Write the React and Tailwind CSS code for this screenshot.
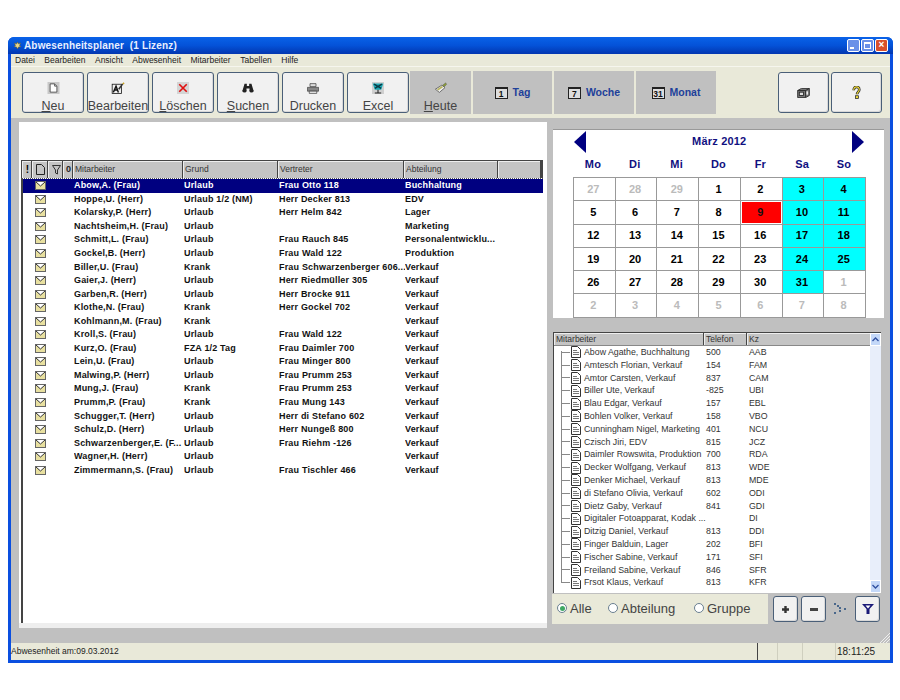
const menus = ['Datei', 'Bearbeiten', 'Ansicht', 'Abwesenheit', 'Mitarbeiter', 'Tabellen', 'Hilfe'];

const absences = [
  ['Abow,A. (Frau)', 'Urlaub', 'Frau Otto 118', 'Buchhaltung'],
  ['Hoppe,U. (Herr)', 'Urlaub 1/2 (NM)', 'Herr Decker 813', 'EDV'],
  ['Kolarsky,P. (Herr)', 'Urlaub', 'Herr Helm 842', 'Lager'],
  ['Nachtsheim,H. (Frau)', 'Urlaub', '', 'Marketing'],
  ['Schmitt,L. (Frau)', 'Urlaub', 'Frau Rauch 845', 'Personalentwicklu...'],
  ['Gockel,B. (Herr)', 'Urlaub', 'Frau Wald 122', 'Produktion'],
  ['Biller,U. (Frau)', 'Krank', 'Frau Schwarzenberger 606...', 'Verkauf'],
  ['Gaier,J. (Herr)', 'Urlaub', 'Herr Riedmüller 305', 'Verkauf'],
  ['Garben,R. (Herr)', 'Urlaub', 'Herr Brocke 911', 'Verkauf'],
  ['Klothe,N. (Frau)', 'Krank', 'Herr Gockel 702', 'Verkauf'],
  ['Kohlmann,M. (Frau)', 'Krank', '', 'Verkauf'],
  ['Kroll,S. (Frau)', 'Urlaub', 'Frau Wald 122', 'Verkauf'],
  ['Kurz,O. (Frau)', 'FZA 1/2 Tag', 'Frau Daimler 700', 'Verkauf'],
  ['Lein,U. (Frau)', 'Urlaub', 'Frau Minger 800', 'Verkauf'],
  ['Malwing,P. (Herr)', 'Urlaub', 'Frau Prumm 253', 'Verkauf'],
  ['Mung,J. (Frau)', 'Krank', 'Frau Prumm 253', 'Verkauf'],
  ['Prumm,P. (Frau)', 'Krank', 'Frau Mung 143', 'Verkauf'],
  ['Schugger,T. (Herr)', 'Urlaub', 'Herr di Stefano 602', 'Verkauf'],
  ['Schulz,D. (Herr)', 'Urlaub', 'Herr Nungeß 800', 'Verkauf'],
  ['Schwarzenberger,E. (F...', 'Urlaub', 'Frau Riehm -126', 'Verkauf'],
  ['Wagner,H. (Herr)', 'Urlaub', '', 'Verkauf'],
  ['Zimmermann,S. (Frau)', 'Urlaub', 'Frau Tischler 466', 'Verkauf'],
];

const staff = [
  ['Abow Agathe, Buchhaltung', '500', 'AAB'],
  ['Amtesch Florian, Verkauf', '154', 'FAM'],
  ['Amtor Carsten, Verkauf', '837', 'CAM'],
  ['Biller Ute, Verkauf', '-825', 'UBI'],
  ['Blau Edgar, Verkauf', '157', 'EBL'],
  ['Bohlen Volker, Verkauf', '158', 'VBO'],
  ['Cunningham Nigel, Marketing', '401', 'NCU'],
  ['Czisch Jiri, EDV', '815', 'JCZ'],
  ['Daimler Rowswita, Produktion', '700', 'RDA'],
  ['Decker Wolfgang, Verkauf', '813', 'WDE'],
  ['Denker Michael, Verkauf', '813', 'MDE'],
  ['di Stefano Olivia, Verkauf', '602', 'ODI'],
  ['Dietz Gaby, Verkauf', '841', 'GDI'],
  ['Digitaler Fotoapparat, Kodak ...', '', 'DI'],
  ['Ditzig Daniel, Verkauf', '813', 'DDI'],
  ['Finger Balduin, Lager', '202', 'BFI'],
  ['Fischer Sabine, Verkauf', '171', 'SFI'],
  ['Freiland Sabine, Verkauf', '846', 'SFR'],
  ['Frsot Klaus, Verkauf', '813', 'KFR'],
];

// [tag, art] art: m = anderer Monat, w = Wochenende, h = heute
const days = [
  ['27', 'm'], ['28', 'm'], ['29', 'm'], ['1', ''], ['2', ''], ['3', 'w'], ['4', 'w'],
  ['5', ''], ['6', ''], ['7', ''], ['8', ''], ['9', 'h'], ['10', 'w'], ['11', 'w'],
  ['12', ''], ['13', ''], ['14', ''], ['15', ''], ['16', ''], ['17', 'w'], ['18', 'w'],
  ['19', ''], ['20', ''], ['21', ''], ['22', ''], ['23', ''], ['24', 'w'], ['25', 'w'],
  ['26', ''], ['27', ''], ['28', ''], ['29', ''], ['30', ''], ['31', 'w'], ['1', 'm'],
  ['2', 'm'], ['3', 'm'], ['4', 'm'], ['5', 'm'], ['6', 'm'], ['7', 'm'], ['8', 'm'],
];

const Envelope = () => (
  <svg width="11" height="9" viewBox="0 0 11 9">
    <rect x="0.5" y="0.5" width="10" height="8" fill="#e8e0a0" stroke="#666" />
    <path d="M1 1l4.500 4L10 1" fill="#fff" stroke="#333" />
  </svg>
);

const DocIcon = () => (
  <svg width="10" height="12" viewBox="0 0 10 12">
    <path d="M0.5 0.500h6l3 3v8h-9z" fill="#fff" stroke="#333" />
    <path d="M2 4.500h4M2 6.500h6M2 8.500h6" stroke="#777" />
  </svg>
);

const icons = {
  neu: (
    <svg width="13" height="12" viewBox="0 0 16 16">
      <rect width="16" height="16" fill="#c8c8c8" />
      <path d="M3.500 2.500h6l3 3v8h-9z" fill="#fff" stroke="#333" />
      <path d="M9.500 2.500v3h3" fill="#ddd" stroke="#333" />
    </svg>
  ),
  edit: (
    <svg width="14" height="13" viewBox="0 0 18 16">
      <rect x="1.500" y="2.500" width="12" height="12" fill="#eee" stroke="#111" />
      <path d="M3 13l3.500-8 3 8M4.500 10h4" fill="none" stroke="#111" strokeWidth="1.800" />
      <path d="M10 9l5-7" stroke="#333" strokeWidth="2" />
      <path d="M15 2l2-1" stroke="#c9a227" strokeWidth="2" />
    </svg>
  ),
  del: (
    <svg width="12" height="12" viewBox="0 0 16 16">
      <rect width="16" height="16" fill="#d4d4d4" />
      <path d="M3 3l10 10M13 3L3 13" stroke="#e01010" strokeWidth="2.200" />
    </svg>
  ),
  find: (
    <svg width="12" height="10" viewBox="0 0 15 13">
      <path d="M3 1h3v3h3V1h3l3 10h-5.500V7H5.500v4H0z" fill="#222" />
      <circle cx="3" cy="10" r="2.500" fill="#222" />
      <circle cx="12" cy="10" r="2.500" fill="#222" />
    </svg>
  ),
  print: (
    <svg width="12" height="11" viewBox="0 0 16 14">
      <path d="M4 .5h8v4H4z" fill="#ddd" stroke="#444" />
      <path d="M.5 5.500h15v5H.5z" fill="#888" stroke="#444" />
      <path d="M3 10.500h10v3H3z" fill="#eee" stroke="#444" />
    </svg>
  ),
  excel: (
    <svg width="12" height="12" viewBox="0 0 17 17">
      <rect width="17" height="17" fill="#cfcfcf" />
      <path d="M1 2h15l-3 9H4z" fill="#19a8b4" />
      <path d="M3 3l10 6M14 3L4 9" stroke="#0b3a45" strokeWidth="2" />
      <path d="M8.500 11v4M4 15.500h9" stroke="#222" strokeWidth="1.500" />
    </svg>
  ),
  heute: (
    <svg width="14" height="12" viewBox="0 0 16 15">
      <path d="M1 9l8-5 4 3-7 6z" fill="#eee" stroke="#555" />
      <path d="M3 9l6-4 1.500 1.500-6 4z" fill="#b9b45a" />
      <path d="M10 4l4-3 1 2-3 3z" fill="#8a9a3a" stroke="#555" strokeWidth=".5" />
    </svg>
  ),
  box: (
    <svg width="13" height="10" viewBox="0 0 15 12">
      <path d="M.5 3L5 .5h9.500V9L10 11.500H.5z" fill="#777" stroke="#222" />
      <path d="M.5 3H10v8.500M10 3l4.500-2.500" fill="none" stroke="#222" />
      <rect x="2.500" y="5" width="5" height="4" fill="#ddd" stroke="#222" />
      <rect x="11" y="4" width="2" height="4" fill="#eee" />
    </svg>
  ),
  help: (
    <svg width="9" height="13" viewBox="0 0 9 14">
      <path d="M1.500 4.500C1.500 2 3 1 4.500 1S7.500 2 7.500 4c0 2-2.500 2.500-2.500 5" fill="none" stroke="#222" strokeWidth="2.800" />
      <path d="M1.500 4.500C1.500 2 3 1 4.500 1S7.500 2 7.500 4c0 2-2.500 2.500-2.500 5" fill="none" stroke="#f1dc3a" strokeWidth="1.200" />
      <rect x="3.500" y="10.500" width="3" height="3" fill="#f1dc3a" stroke="#222" strokeWidth=".8" />
    </svg>
  ),
};

const xpButton = 'rounded-[3px] border border-[#4a5f78] bg-[#f1f1f1] shadow-[inset_-1px_-1px_0_#d8d8d8]';

function ToolButton({ icon, u, rest }) {
  return (
    <div className={`${xpButton} w-[62px] h-[41px] flex flex-col items-center pt-[8px] overflow-hidden`}>
      <div className="h-[14px] shrink-0 flex items-center">{icon}</div>
      <div className="mt-[4px] text-[12.500px] leading-[15px] text-[#444] whitespace-nowrap">
        {u ? <span className="underline">{u}</span> : null}{rest}
      </div>
    </div>
  );
}

function ViewTab({ num, label, w }) {
  return (
    <div className={`${w} h-[43px] bg-[#c0c0c0] flex items-center justify-center gap-[5px]`}>
      <span className="w-[13px] h-[12px] border border-[#222] border-t-2 bg-[#ddd] text-[8.500px] font-bold leading-[10px] text-center text-[#111]">{num}</span>
      <span className="text-[10.500px] font-bold text-[#20409a]">{label}</span>
    </div>
  );
}

function HeadCell({ w, children, center }) {
  return (
    <div className={`${w} h-full shrink-0 bg-[#c4c4c4] border-r border-[#444] shadow-[inset_1px_1px_0_#eee] text-[8.500px] text-[#333] pl-[2px] overflow-hidden whitespace-nowrap flex items-center ${center ? 'justify-center pl-0' : ''}`}>
      {children}
    </div>
  );
}

function Radio({ label, checked, w }) {
  return (
    <div className={`${w} flex items-center gap-[3px]`}>
      <span className="w-[10px] h-[10px] rounded-full border border-[#6a7f90] bg-white flex items-center justify-center">
        {checked ? <span className="w-[5px] h-[5px] rounded-full bg-[#3fa864]" /> : null}
      </span>
      <span className="text-[13px] leading-none text-[#444]">{label}</span>
    </div>
  );
}

function SmallButton({ children }) {
  return <div className={`${xpButton} w-[25px] h-[26px] flex items-center justify-center`}>{children}</div>;
}

export default function App() {
  return (
    <div className="w-[900px] h-[700px] bg-white pt-[37px] pl-[8px] overflow-hidden font-['Liberation_Sans',Arial,sans-serif]">
      <div className="w-[885px] h-[626px] flex flex-col rounded-t-[6px] bg-[#0a4fe0] px-[3px] pb-[3px]">
        {/* Titelleiste */}
        <div className="h-[17px] -mx-[3px] px-[5px] shrink-0 flex items-center rounded-t-[6px] bg-gradient-to-b from-[#0a62e8] via-[#0452d8] to-[#0336b0]">
          <svg width="9" height="9" viewBox="0 0 9 9">
            <path d="M4.500 1l1 2 2-1-1 2.500 1.500 1-2.500.5-1 2-1-2-2.500-.5 1.500-1L1.500 2l2 1z" fill="#e8d890" stroke="#6a5a20" strokeWidth=".5" />
          </svg>
          <span className="ml-[2px] text-[10px] font-bold text-[#e8f0ff] tracking-[0.15px] whitespace-pre">Abwesenheitsplaner  (1 Lizenz)</span>
          <div className="ml-auto flex gap-[1px]">
            <div className="w-[13px] h-[13px] rounded-[2px] border border-white bg-[#6a90e8] flex items-end pl-[2px] pb-[2px]"><span className="w-[4px] h-[2px] bg-white" /></div>
            <div className="w-[13px] h-[13px] rounded-[2px] border border-white bg-[#6a90e8] flex items-center justify-center"><span className="w-[7px] h-[7px] border border-white border-t-2" /></div>
            <div className="w-[13px] h-[13px] rounded-[2px] border border-white bg-[#d8502c] text-white text-[10px] font-bold leading-[10px] text-center">×</div>
          </div>
        </div>

        {/* Menue */}
        <div className="h-[13px] shrink-0 bg-[#e9e9d9] flex items-center pl-[4px] gap-[9.500px] text-[8.500px] text-[#222] border-b border-[#f6f6ee]">
          {menus.map(m => <span key={m}>{m}</span>)}
        </div>

        {/* Werkzeugleiste */}
        <div className="h-[51px] shrink-0 bg-[#e9e9d9] flex items-start pl-[11px] pt-[5px]">
          <div className="flex gap-[3px]">
            <ToolButton icon={icons.neu} u="N" rest="eu" />
            <ToolButton icon={icons.edit} rest="Bearbeiten" />
            <ToolButton icon={icons.del} u="L" rest="öschen" />
            <ToolButton icon={icons.find} u="S" rest="uchen" />
            <ToolButton icon={icons.print} rest="Drucken" />
            <ToolButton icon={icons.excel} rest="Excel" />
          </div>
          <div className="-mt-[1px] ml-[1px] flex gap-[2px]">
            <div className="w-[61px] h-[43px] bg-[#c0c0c0] flex flex-col items-center pt-[10px]">
              <div className="h-[14px] flex items-center">{icons.heute}</div>
              <div className="mt-[4px] text-[12.500px] leading-[15px] text-[#444]"><span className="underline">H</span>eute</div>
            </div>
            <ViewTab num="1" label="Tag" w="w-[79px]" />
            <ViewTab num="7" label="Woche" w="w-[80px]" />
            <ViewTab num="31" label="Monat" w="w-[80px]" />
          </div>
          <div className="ml-[62px] flex gap-[2px]">
            <div className={`${xpButton} w-[51px] h-[41px] flex items-center justify-center`}>{icons.box}</div>
            <div className={`${xpButton} w-[51px] h-[41px] flex items-center justify-center`}>{icons.help}</div>
          </div>
        </div>

        {/* Arbeitsbereich */}
        <div className="flex-1 min-h-0 bg-[#c0c0c0] flex pl-[8px] pt-[4px] relative">
          {/* Abwesenheiten */}
          <div className="w-[528px] h-[506px] shrink-0 bg-white pt-[38px] pl-[2px] border-b-[5px] border-[#eee]">
            <div className="h-full flex flex-col">
              <div className="w-[522px] h-[18px] shrink-0 flex border-t border-l border-r-2 border-[#444]">
                <HeadCell w="w-[10px]" center><span className="font-bold text-[10px] text-black">!</span></HeadCell>
                <HeadCell w="w-[16px]" center>
                  <svg width="9" height="11" viewBox="0 0 9 11"><path d="M.5.5h5l3 3v7h-8z" fill="none" stroke="#222" /></svg>
                </HeadCell>
                <HeadCell w="w-[15px]" center>
                  <svg width="9" height="10" viewBox="0 0 9 10"><path d="M.5.5h8L5.500 5v4l-2-1V5z" fill="none" stroke="#333" /></svg>
                </HeadCell>
                <HeadCell w="w-[10px]" center><span className="font-bold text-[9px] text-[#222]">0</span></HeadCell>
                <HeadCell w="w-[110px]">Mitarbeiter</HeadCell>
                <HeadCell w="w-[95px]">Grund</HeadCell>
                <HeadCell w="w-[126px]">Vertreter</HeadCell>
                <HeadCell w="w-[94px]">Abteilung</HeadCell>
                <HeadCell w="flex-1"></HeadCell>
              </div>
              <div className="w-[522px] shrink-0 border-b border-dotted border-[#555]" />
              <div className="flex-1 min-h-0 w-[522px] border-l-2 border-[#444]">
                {absences.map((row, i) => (
                  <div
                    key={row[0]}
                    className={`h-[13.550px] flex items-center text-[9px] font-bold leading-none tracking-[0.18px] whitespace-nowrap ${i === 0 ? 'bg-[#000080] text-white' : 'text-[#111]'}`}
                  >
                    <div className="w-[51px] pl-[12px] flex items-center"><Envelope /></div>
                    <div className="w-[110px] overflow-hidden">{row[0]}</div>
                    <div className="w-[95px] overflow-hidden">{row[1]}</div>
                    <div className="w-[126px] overflow-hidden">{row[2]}</div>
                    <div className="flex-1 overflow-hidden">{row[3]}</div>
                  </div>
                ))}
              </div>
            </div>
          </div>

          {/* Rechte Spalte */}
          <div className="ml-[6px] w-[332px] shrink-0 flex flex-col pt-[7px]">
            <div className="w-[331px] h-[189px] bg-white border-t border-[#999] pl-[20px] shrink-0">
              <div className="w-[293px] flex items-center justify-between h-[23px] pl-[1px] pr-[1.500px]">
                <svg width="12" height="22" viewBox="0 0 12 22"><path d="M12 0v22L0 11z" fill="#000080" /></svg>
                <span className="text-[11px] font-bold text-[#101080] tracking-[0.2px]">März 2012</span>
                <svg width="12" height="22" viewBox="0 0 12 22"><path d="M0 0v22l12-11z" fill="#000080" /></svg>
              </div>
              <div className="w-[293px] grid grid-cols-7 h-[24px] pb-[2px] items-center">
                {['Mo', 'Di', 'Mi', 'Do', 'Fr', 'Sa', 'So'].map(d => (
                  <div key={d} className="text-center pr-[2px] text-[11px] font-bold text-[#101080] tracking-[0.2px]">{d}</div>
                ))}
              </div>
              <div className="w-[293px] grid grid-cols-7 border-t border-l border-[#999]">
                {days.map(([d, t], i) => (
                  <div
                    key={i}
                    className={`h-[23.300px] pr-[2px] border-r border-b border-[#999] flex items-center justify-center text-[11px] font-bold ${
                      t === 'm' ? 'text-[#bbb]' : t === 'w' ? 'bg-[#00ffff] text-black' : t === 'h' ? 'bg-[#ff0000] text-[#111] shadow-[inset_0_0_0_1px_#fff]' : 'text-black'
                    }`}
                  >
                    {d}
                  </div>
                ))}
              </div>
            </div>

            <div className="mt-[14px] w-[328px] h-[261px] shrink-0 bg-white border-l border-t border-[#444] flex flex-col overflow-hidden relative">
              <div className="flex h-[13px] shrink-0 border-b border-[#888]">
                <HeadCell w="w-[150px]">Mitarbeiter</HeadCell>
                <HeadCell w="w-[43px]">Telefon</HeadCell>
                <HeadCell w="flex-1">Kz</HeadCell>
              </div>
              <div className="pr-[12px] relative">
                {staff.map(s => (
                  <div key={s[0]} className="h-[12.800px] flex items-center text-[8.800px] leading-none text-[#333] whitespace-nowrap">
                    <div className="w-[9px] ml-[7px] h-px bg-[#888]" />
                    <div className="ml-[1px] mr-[3px] flex items-center"><DocIcon /></div>
                    <div className="w-[122px]">{s[0]}</div>
                    <div className="w-[43px]">{s[1]}</div>
                    <div>{s[2]}</div>
                  </div>
                ))}
                <div className="absolute left-[7px] top-[5px] bottom-[6px] w-px bg-[#888]" />
              </div>
              <div className="absolute right-0 top-0 bottom-0 w-[11px] bg-[#e8eefa] flex flex-col justify-between">
                <div className="h-[13px] bg-[#c4d8f8] border border-white flex items-center justify-center">
                  <svg width="7" height="5" viewBox="0 0 7 5"><path d="M.5 4l3-3 3 3" fill="none" stroke="#3050a0" strokeWidth="1.300" /></svg>
                </div>
                <div className="h-[13px] bg-[#c4d8f8] border border-white flex items-center justify-center">
                  <svg width="7" height="5" viewBox="0 0 7 5"><path d="M.5 1l3 3 3-3" fill="none" stroke="#3050a0" strokeWidth="1.300" /></svg>
                </div>
              </div>
            </div>

            <div className="mt-[1px] flex items-start">
              <div className="w-[216px] h-[30px] -ml-[1px] bg-[#e9e9d9] flex items-center pl-[5px] pb-[2px]">
                <Radio label="Alle" checked w="w-[51px]" />
                <Radio label="Abteilung" w="w-[86px]" />
                <Radio label="Gruppe" w="w-[70px]" />
              </div>
              <div className="ml-[5px] mt-[2px] flex items-center">
                <SmallButton>
                  <svg width="9" height="9" viewBox="0 0 9 9"><path d="M4.500 1v7M1 4.500h7" stroke="#333" strokeWidth="2.400" /></svg>
                </SmallButton>
                <div className="ml-[3px]">
                  <SmallButton><span className="w-[8px] h-[3px] bg-[#444]" /></SmallButton>
                </div>
                <svg className="ml-[7px]" width="14" height="12" viewBox="0 0 14 12">
                  <path d="M1 1h3M6 5h3M11 6h3M1 10h3M6 8h2M4 3h2" stroke="#224a7a" strokeWidth="1.300" strokeDasharray="2 1" />
                </svg>
                <div className="ml-[8px]">
                  <SmallButton>
                    <svg width="12" height="10" viewBox="0 0 12 10"><path d="M0 0h12L7.500 5v5h-3V5z" fill="#1a1a78" /><path d="M3.500 1.500h5L6 4.500z" fill="#fff" /></svg>
                  </SmallButton>
                </div>
              </div>
            </div>
          </div>

          {/* Greifer */}
          <svg className="absolute right-0 bottom-0" width="10" height="10" viewBox="0 0 10 10">
            <path d="M0 10L10 0M3 10l7-7M6 10l4-4" stroke="#eee" />
          </svg>
        </div>

        {/* Statusleiste */}
        <div className="h-[17px] shrink-0 bg-[#e9e9d9] flex items-center text-[8.500px] text-[#222] whitespace-nowrap">
          <div className="w-[746px] leading-none">Abwesenheit am:09.03.2012</div>
          <div className="w-[21px] h-full border-l border-[#444] border-r border-r-[#cfcfbf]" />
          <div className="w-[25px] h-full border-r border-[#cfcfbf]" />
          <div className="w-[33px] h-full border-r border-[#cfcfbf]" />
          <div className="pl-[1px] text-[10px]">18:11:25</div>
        </div>
      </div>
    </div>
  );
}
